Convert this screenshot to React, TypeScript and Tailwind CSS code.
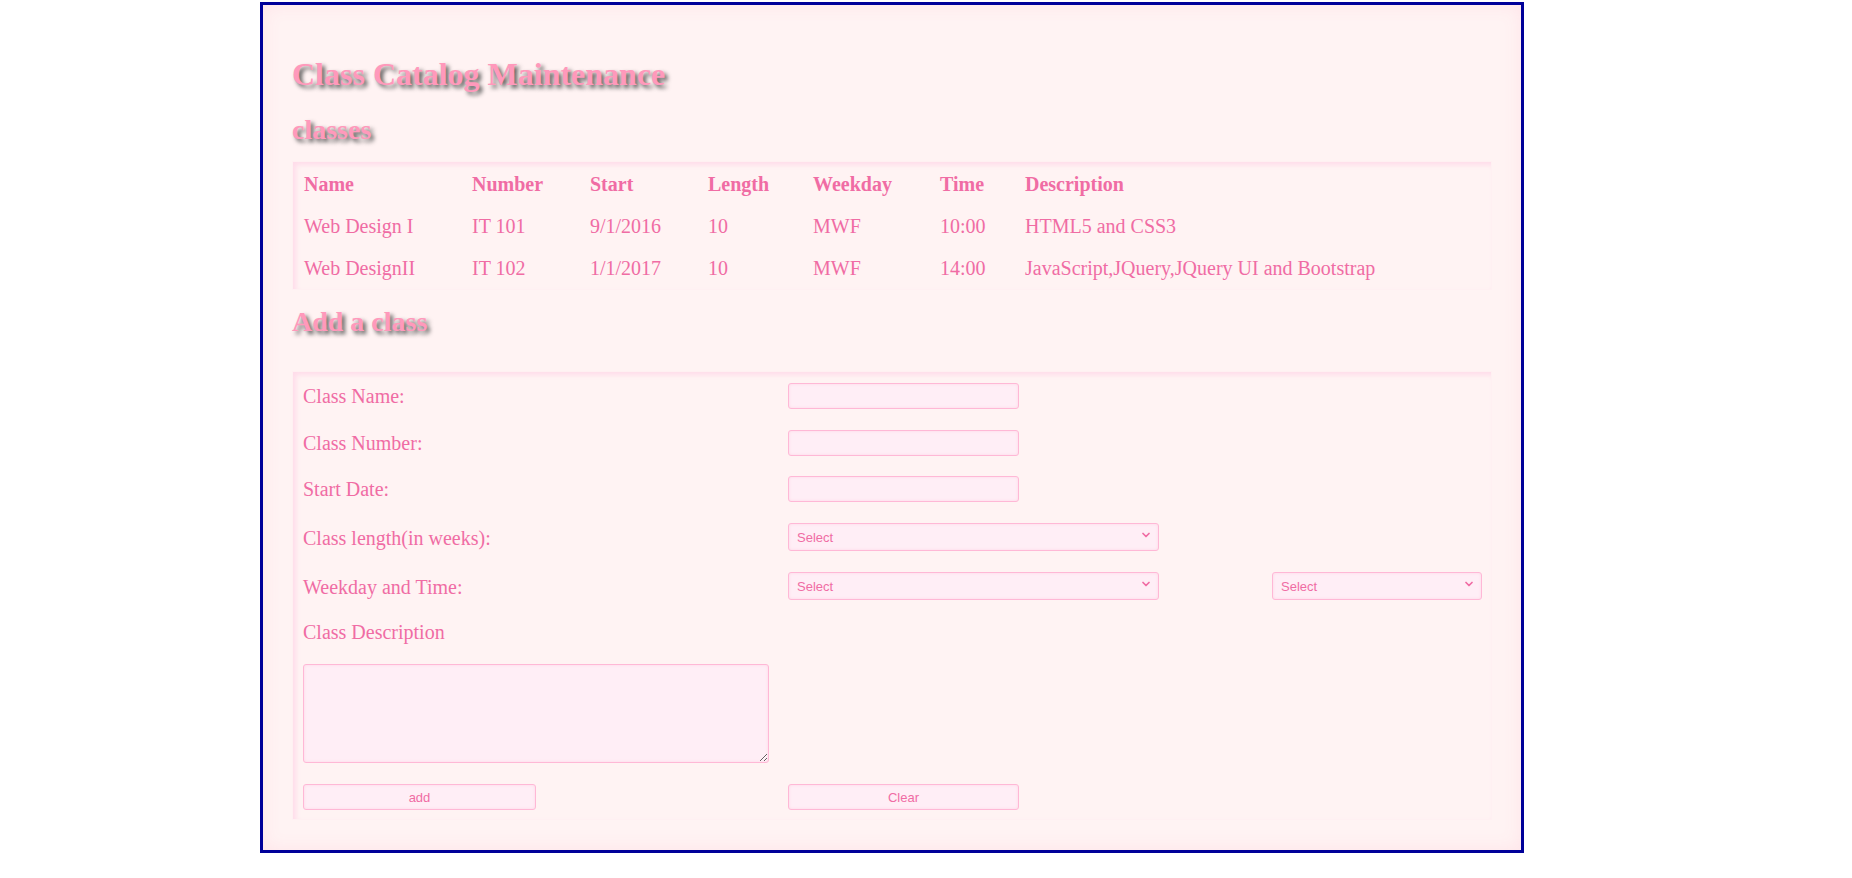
import { ChevronDown } from "lucide-react";

const CLASSES = [
  { name: "Web Design I", number: "IT 101", start: "9/1/2016", length: "10", weekday: "MWF", time: "10:00", desc: "HTML5 and CSS3" },
  { name: "Web DesignII", number: "IT 102", start: "1/1/2017", length: "10", weekday: "MWF", time: "14:00", desc: "JavaScript,JQuery,JQuery UI and Bootstrap" },
];

const heading = "font-bold text-[#ff99bb] [text-shadow:3px_3px_4px_#555]";
const field =
  "bg-[#ffeef6] border border-[#ffb8d6] rounded-[3px] shadow-[inset_0_0_3px_#ffd3e5] outline-none";
const sans = "text-[13px] text-[#f06ca4] font-['Liberation_Sans',Arial,sans-serif]";

function Select({ width }: { width: string }) {
  return (
    <div className={`relative h-[28px] mb-[8px] ${width}`}>
      <select className={`${field} ${sans} appearance-none w-full h-full pl-[8px]`} defaultValue="">
        <option value="">Select</option>
      </select>
      <ChevronDown
        size={12}
        strokeWidth={3.5}
        className="absolute right-[7px] top-[9px] text-[#f06ca4] pointer-events-none"
      />
    </div>
  );
}

function Row({ h, label, children, third }: { h: string; label?: React.ReactNode; children?: React.ReactNode; third?: React.ReactNode }) {
  return (
    <div className={`grid grid-cols-[485px_484px_1fr] items-center ${h}`}>
      <div>{label}</div>
      <div>{children}</div>
      <div>{third}</div>
    </div>
  );
}

export default function App() {
  return (
    <div className="min-h-screen bg-white font-['Liberation_Serif','Times_New_Roman',serif] text-[#f06ca4]">
      <div className="ml-[260px] mt-[2px] w-[1264px] border-[3px] border-[#000099] bg-[#fff3f3] shadow-[inset_0_0_18px_#ffe3e8] pt-[51px] pb-[30px] px-[29px]">
        <h1 className={`${heading} text-[32px] leading-[37px]`}>Class Catalog Maintenance</h1>
        <h2 className={`${heading} text-[28px] leading-[32px] mt-[21px]`}>classes</h2>

        {/* class list */}
        <div className="mt-[15px] border border-[#fff0f2] shadow-[inset_3px_3px_5px_#ffdcea]">
          <table className="table-fixed w-full text-[20px] text-left">
            <colgroup>
              <col className="w-[168px]" />
              <col className="w-[118px]" />
              <col className="w-[118px]" />
              <col className="w-[105px]" />
              <col className="w-[127px]" />
              <col className="w-[85px]" />
              <col />
            </colgroup>
            <thead>
              <tr className="h-[43px]">
                {["Name", "Number", "Start", "Length", "Weekday", "Time", "Description"].map((c) => (
                  <th key={c} className="pl-[11px] font-bold">{c}</th>
                ))}
              </tr>
            </thead>
            <tbody>
              {CLASSES.map((c) => (
                <tr key={c.number} className="h-[42px]">
                  <td className="pl-[11px]">{c.name}</td>
                  <td className="pl-[11px]">{c.number}</td>
                  <td className="pl-[11px]">{c.start}</td>
                  <td className="pl-[11px]">{c.length}</td>
                  <td className="pl-[11px]">{c.weekday}</td>
                  <td className="pl-[11px]">{c.time}</td>
                  <td className="pl-[11px]">{c.desc}</td>
                </tr>
              ))}
            </tbody>
          </table>
        </div>

        <h2 className={`${heading} text-[28px] leading-[32px] mt-[16px]`}>Add a class</h2>

        {/* add form */}
        <div className="mt-[33px] border border-[#fff0f2] shadow-[inset_3px_3px_5px_#ffdcea] pl-[10px] pr-[3px] pb-[2px] text-[20px]">
          <Row h="h-[47px]" label="Class Name:">
            <input className={`${field} w-[231px] h-[26px]`} />
          </Row>
          <Row h="h-[47px]" label="Class Number:">
            <input className={`${field} w-[231px] h-[26px]`} />
          </Row>
          <Row h="h-[46px]" label="Start Date:">
            <input className={`${field} w-[231px] h-[26px]`} />
          </Row>
          <Row h="h-[51px]" label="Class length(in weeks):">
            <Select width="w-[371px]" />
          </Row>
          <Row h="h-[47px]" label="Weekday and Time:" third={<Select width="w-[210px]" />}>
            <Select width="w-[371px]" />
          </Row>
          <Row h="h-[44px]" label="Class Description" />
          <div className="h-[119px] flex items-center">
            <textarea className={`${field} w-[466px] h-[99px]`} />
          </div>
          <Row
            h="h-[44px]"
            label={<button className={`${field} ${sans} w-[233px] h-[26px]`}>add</button>}
          >
            <button className={`${field} ${sans} w-[231px] h-[26px]`}>Clear</button>
          </Row>
        </div>
      </div>
    </div>
  );
}
